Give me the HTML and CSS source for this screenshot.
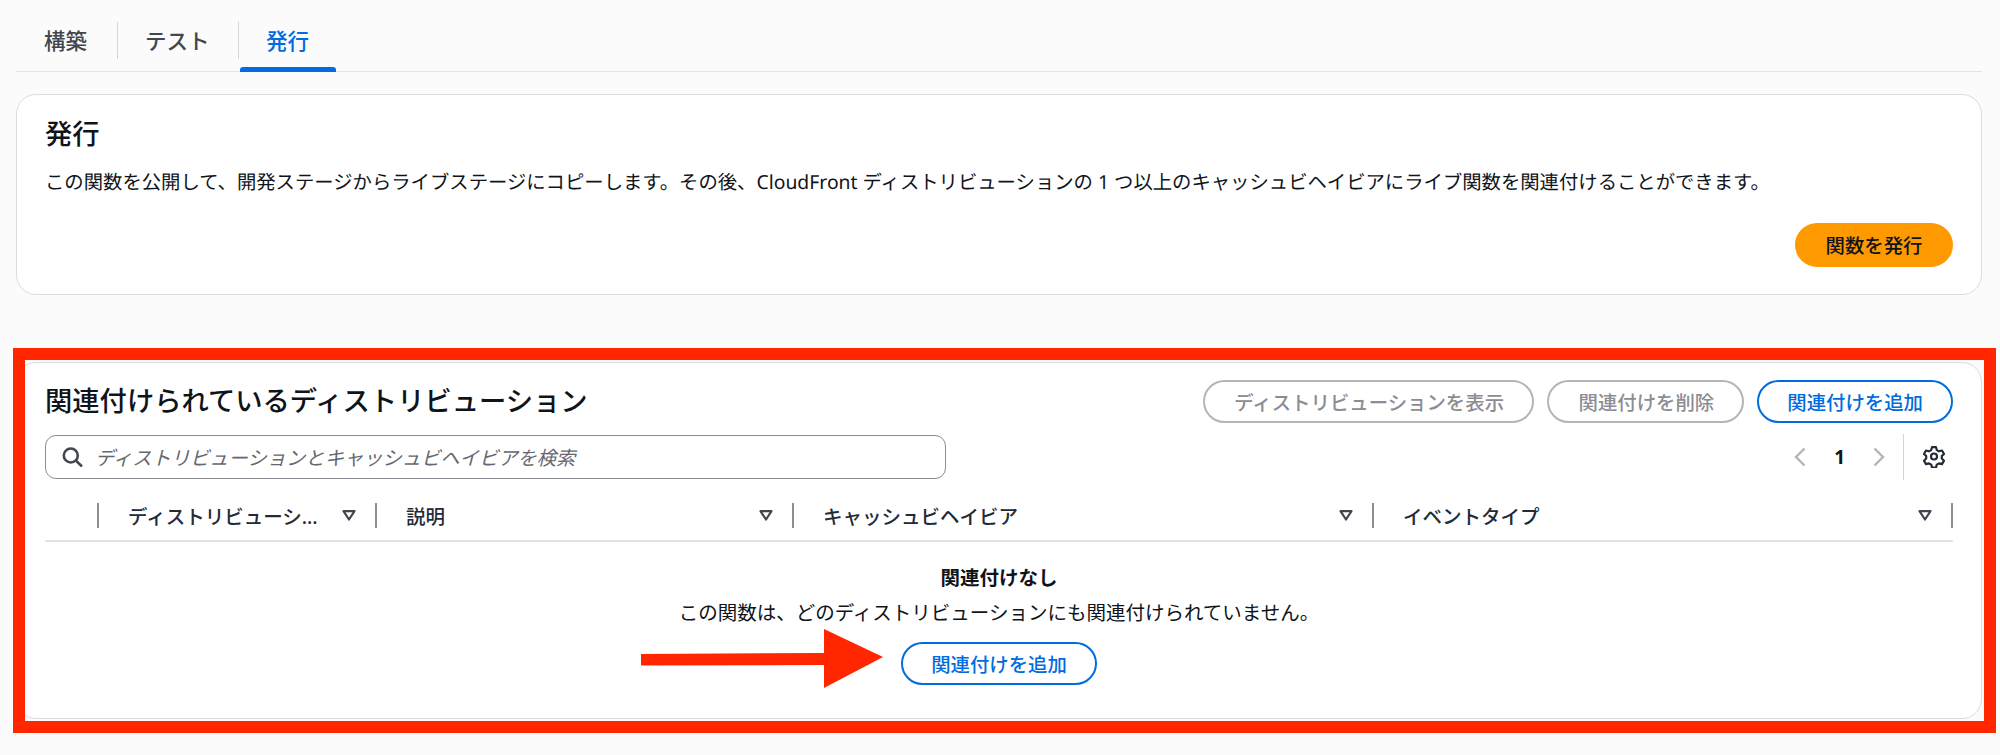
FILE: index.html
```html
<!DOCTYPE html>
<html lang="ja">
<head>
    <meta charset="UTF-8">
    <title>発行</title>
    <link rel="stylesheet" href="styles.css">
</head>
<body>
    <div class="tabs">
        <div class="tab">構築</div>
        <div class="tab">テスト</div>
        <div class="tab active">発行</div>
    </div>

    <div class="card publish-card">
        <h2>発行</h2>
        <p class="desc">この関数を公開して、開発ステージからライブステージにコピーします。その後、CloudFront ディストリビューションの 1 つ以上のキャッシュビヘイビアにライブ関数を関連付けることができます。</p>
        <div class="publish-actions">
            <button class="btn primary">関数を発行</button>
        </div>
    </div>

    <div class="card assoc-card">
        <div class="assoc-head">
            <h2>関連付けられているディストリビューション</h2>
            <div class="assoc-buttons">
                <button class="btn disabled">ディストリビューションを表示</button>
                <button class="btn disabled">関連付けを削除</button>
                <button class="btn normal">関連付けを追加</button>
            </div>
        </div>

        <div class="tools">
            <div class="search">
                <svg class="search-icon" width="21" height="20" viewBox="0 0 21 20" fill="none" stroke="#424650" stroke-width="2.6">
                    <circle cx="8.8" cy="8.5" r="7"></circle>
                    <path d="M13.8 13.5 L20 19.5"></path>
                </svg>
                <span class="placeholder">ディストリビューションとキャッシュビヘイビアを検索</span>
            </div>
            <div class="pager">
                <svg width="12" height="20" viewBox="0 0 12 20" fill="none" stroke="#b4b4bb" stroke-width="2.4"><path d="M10.5 1.5 L2 10 L10.5 18.5"></path></svg>
                <span class="page-num">1</span>
                <svg width="12" height="20" viewBox="0 0 12 20" fill="none" stroke="#b4b4bb" stroke-width="2.4"><path d="M1.5 1.5 L10 10 L1.5 18.5"></path></svg>
            </div>
            <div class="settings">
                <svg width="22" height="22" viewBox="0 0 22 22" fill="none" stroke="#232b37" stroke-width="2.2" stroke-linejoin="round">
                    <path d="M9 1.5 h4 l.8 3 2.2 1.3 3-.8 2 3.5 -2.2 2.2 v2.6 l2.2 2.2 -2 3.5 -3-.8 -2.2 1.3 -.8 3 h-4 l-.8-3 -2.2-1.3 -3 .8 -2-3.5 2.2-2.2 v-2.6 l-2.2-2.2 2-3.5 3 .8 2.2-1.3 z" transform="translate(0 -.3) scale(1 .97)"></path>
                    <circle cx="11" cy="10.5" r="3"></circle>
                </svg>
            </div>
        </div>

        <div class="table-head">
            <div class="col col-check"></div>
            <div class="col col-name"><span class="col-label">ディストリビューシ...</span>
                <svg class="filter" width="14" height="11" viewBox="0 0 14 11" fill="none" stroke="#424650" stroke-width="2.2" stroke-linejoin="round"><path d="M1.5 1.2 H12.5 L7 9.5 Z"></path></svg>
            </div>
            <div class="col col-desc"><span class="col-label">説明</span>
                <svg class="filter" width="14" height="11" viewBox="0 0 14 11" fill="none" stroke="#424650" stroke-width="2.2" stroke-linejoin="round"><path d="M1.5 1.2 H12.5 L7 9.5 Z"></path></svg>
            </div>
            <div class="col col-cache"><span class="col-label">キャッシュビヘイビア</span>
                <svg class="filter" width="14" height="11" viewBox="0 0 14 11" fill="none" stroke="#424650" stroke-width="2.2" stroke-linejoin="round"><path d="M1.5 1.2 H12.5 L7 9.5 Z"></path></svg>
            </div>
            <div class="col col-event"><span class="col-label">イベントタイプ</span>
                <svg class="filter" width="14" height="11" viewBox="0 0 14 11" fill="none" stroke="#424650" stroke-width="2.2" stroke-linejoin="round"><path d="M1.5 1.2 H12.5 L7 9.5 Z"></path></svg>
            </div>
        </div>

        <div class="empty">
            <div class="empty-title">関連付けなし</div>
            <div class="empty-text">この関数は、どのディストリビューションにも関連付けられていません。</div>
            <button class="btn normal">関連付けを追加</button>
        </div>
    </div>

    <!-- annotation drawn over the screenshot -->
    <div class="red-box"></div>
    <svg class="red-arrow" width="244" height="60" viewBox="0 0 244 60">
        <polygon points="0,25 183,24 183,0 242,28 183,59 183,36 0,36.5" fill="#ff2600"></polygon>
    </svg>
</body>
</html>
```

FILE: styles.css
```css
* {
    box-sizing: border-box;
}

body {
    font-family: "Noto Sans", "Noto Sans CJK JP", sans-serif;
    background-color: #fbfbfb;
    color: #0f141a;
    margin: 0;
    padding: 0 18px 0 16px;
    height: 755px;
    overflow: hidden;
    position: relative;
    font-size: 19.5px;
}

h2 {
    margin: 0;
    font-size: 27.3px;
    font-weight: 500;
    line-height: 36px;
    white-space: nowrap;
}

/* Tabs */
.tabs {
    display: flex;
    height: 72px;
    padding-top: 22px;
    border-bottom: 1.5px solid #e3e3e6;
}

.tab {
    height: 37px;
    padding: 0 0 0 27px;
    font-size: 21.5px;
    font-weight: 500;
    line-height: 37px;
    color: #424650;
    border-left: 1px solid #d5d5d9;
    white-space: nowrap;
}

.tab:first-child {
    border-left: none;
    width: 101px;
    padding-left: 28px;
}

.tab:nth-child(2) {
    width: 121px;
}

.tab.active {
    width: 98px;
    padding-left: 27px;
    color: #006ce0;
    position: relative;
}

.tab.active::after {
    content: "";
    position: absolute;
    left: 1px;
    right: 0;
    top: 45px;
    height: 5px;
    background-color: #006ce0;
    border-radius: 3px 3px 0 0;
}

/* Cards */
.card {
    background-color: white;
    border: 1.5px solid #dcdce0;
    border-radius: 20px;
}

.publish-card {
    margin-top: 22px;
    height: 201px;
    padding: 20.5px 28px 0 28px;
}

.desc {
    margin: 14px 0 0;
    font-size: 19.35px;
    line-height: 32px;
    white-space: nowrap;
    text-rendering: geometricPrecision;
}

.publish-actions {
    display: flex;
    justify-content: flex-end;
    margin-top: 25px;
}

.btn {
    font-family: inherit;
    font-size: 19.4px;
    font-weight: 500;
    height: 43px;
    padding: 0 28px;
    border-radius: 22px;
    background-color: white;
    white-space: nowrap;
}

.btn.primary {
    background-color: #ff9900;
    border: none;
    color: #0f141a;
    height: 44px;
    width: 158px;
    padding: 0;
}

.btn.normal {
    border: 2.5px solid #006ce0;
    color: #006ce0;
}

.btn.disabled {
    border: 2.5px solid #b4b4bb;
    color: #8c8c94;
    padding: 0 28px 0 29.5px;
}

.assoc-card {
    margin-top: 67px;
    height: 357px;
    padding: 16.5px 28px 0 28px;
}

.assoc-head {
    display: flex;
    justify-content: space-between;
    align-items: center;
    height: 43px;
}

.assoc-buttons {
    display: flex;
    gap: 13px;
}

/* Search and pagination */
.tools {
    display: flex;
    align-items: center;
    margin-top: 11px;
    height: 46px;
}

.search {
    width: 901px;
    height: 44px;
    border: 1.5px solid #8c8c94;
    border-radius: 11px;
    display: flex;
    align-items: center;
    gap: 12px;
    padding-left: 16px;
}

.placeholder {
    font-style: italic;
    color: #656871;
    font-size: 19.3px;
}

.pager {
    margin-left: auto;
    display: flex;
    align-items: center;
    gap: 28px;
}

.page-num {
    font-weight: 700;
    font-size: 19px;
}

.settings {
    margin-left: 18px;
    width: 50px;
    height: 46px;
    padding-left: 19px;
    border-left: 1.5px solid #d5d5d9;
    display: flex;
    align-items: center;
}

/* Table */
.table-head {
    display: flex;
    margin-top: 23px;
    height: 39px;
    border-bottom: 2px solid #e3e3e6;
    padding-bottom: 12px;
}

.col {
    display: flex;
    align-items: center;
    justify-content: space-between;
    padding: 0 19px 0 29px;
    border-right: 2px solid #8c8c94;
}

.col-check {
    width: 54px;
    padding: 0;
}

.col-name {
    width: 278px;
}

.col-desc {
    width: 417px;
}

.col-cache {
    width: 580px;
}

.col-event {
    flex: 1;
}

.col-label {
    font-weight: 500;
    color: #232b37;
    white-space: nowrap;
}

/* Empty state */
.empty {
    display: flex;
    flex-direction: column;
    align-items: center;
    padding-top: 23px;
}

.empty-title {
    font-weight: 700;
    line-height: 26px;
}

.empty-text {
    margin-top: 9px;
    line-height: 26px;
}

.empty .btn {
    margin-top: 16px;
}

/* Red annotation */
.red-box {
    position: absolute;
    left: 13px;
    top: 348px;
    width: 1983px;
    height: 385px;
    border: 12px solid #ff2600;
    pointer-events: none;
}

.red-arrow {
    position: absolute;
    left: 641px;
    top: 629px;
}
```
